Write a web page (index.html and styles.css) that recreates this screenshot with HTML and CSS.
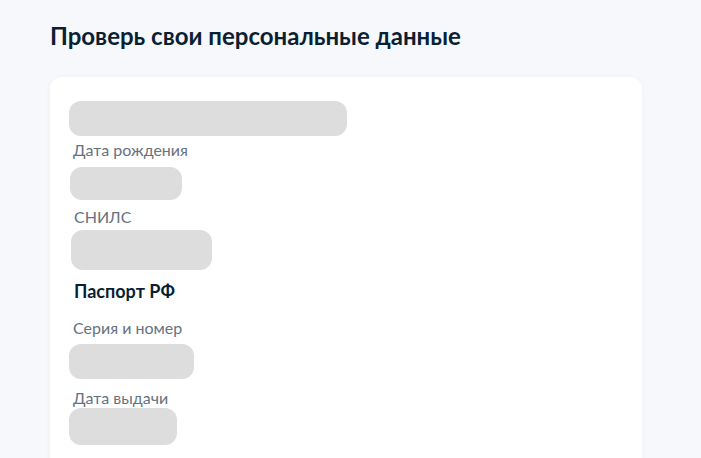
FILE: index.html
```html
<!DOCTYPE html>
<html lang="ru">
<head>
<meta charset="utf-8">
<title>Проверь свои персональные данные</title>
<link rel="stylesheet" href="styles.css">
</head>
<body>
<main class="page">
  <h1 class="title">Проверь свои персональные данные</h1>
  <section class="card">
    <div class="sk sk-name"></div>
    <div class="label l-birth">Дата рождения</div>
    <div class="sk sk-birth"></div>
    <div class="label l-snils">СНИЛС</div>
    <div class="sk sk-snils"></div>
    <div class="section-title">Паспорт РФ</div>
    <div class="label l-series">Серия и номер</div>
    <div class="sk sk-series"></div>
    <div class="label l-issue">Дата выдачи</div>
    <div class="sk sk-issue"></div>
  </section>
</main>
</body>
</html>
```

FILE: styles.css
```css
html, body {
  margin: 0;
  padding: 0;
  height: 100%;
  overflow: hidden;
}
body {
  background: #f6f8fb;
  font-family: Lato, "Noto Sans", sans-serif;
  color: #0b1f33;
}
.page {
  padding: 20px 0 0 50px;
}
.title {
  margin: 0;
  font-size: 24px;
  line-height: 32px;
  font-weight: 700;
  color: #0b1f33;
}
.card {
  margin-top: 25px;
  width: 592px;
  height: 420px;
  box-sizing: border-box;
  background: #ffffff;
  border-radius: 12px;
  box-shadow: 0 1px 6px rgba(11, 31, 51, 0.04);
  padding: 24px 0 0 19px;
  display: flex;
  flex-direction: column;
  align-items: flex-start;
}
.sk {
  background: #dddddd;
  border-radius: 12px;
}
.label {
  font-size: 16px;
  line-height: 20px;
  color: #66727f;
  padding-left: 4px;
}
.section-title {
  font-size: 18px;
  line-height: 22px;
  font-weight: 700;
  color: #0b1f33;
  padding-left: 5px;
  margin-top: 10px;
}
.sk-name { width: 278px; height: 35px; }
.l-birth { margin-top: 4px; }
.sk-birth { width: 112px; height: 33px; margin-top: 7px; margin-left: 1px; }
.l-snils { margin-top: 7px; padding-left: 5px; }
.sk-snils { width: 141px; height: 40px; margin-top: 3px; margin-left: 2px; }
.l-series { margin-top: 16px; }
.sk-series { width: 125px; height: 35px; margin-top: 6px; }
.l-issue { margin-top: 9px; }
.sk-issue { width: 108px; height: 37px; margin-top: 0; }
```
